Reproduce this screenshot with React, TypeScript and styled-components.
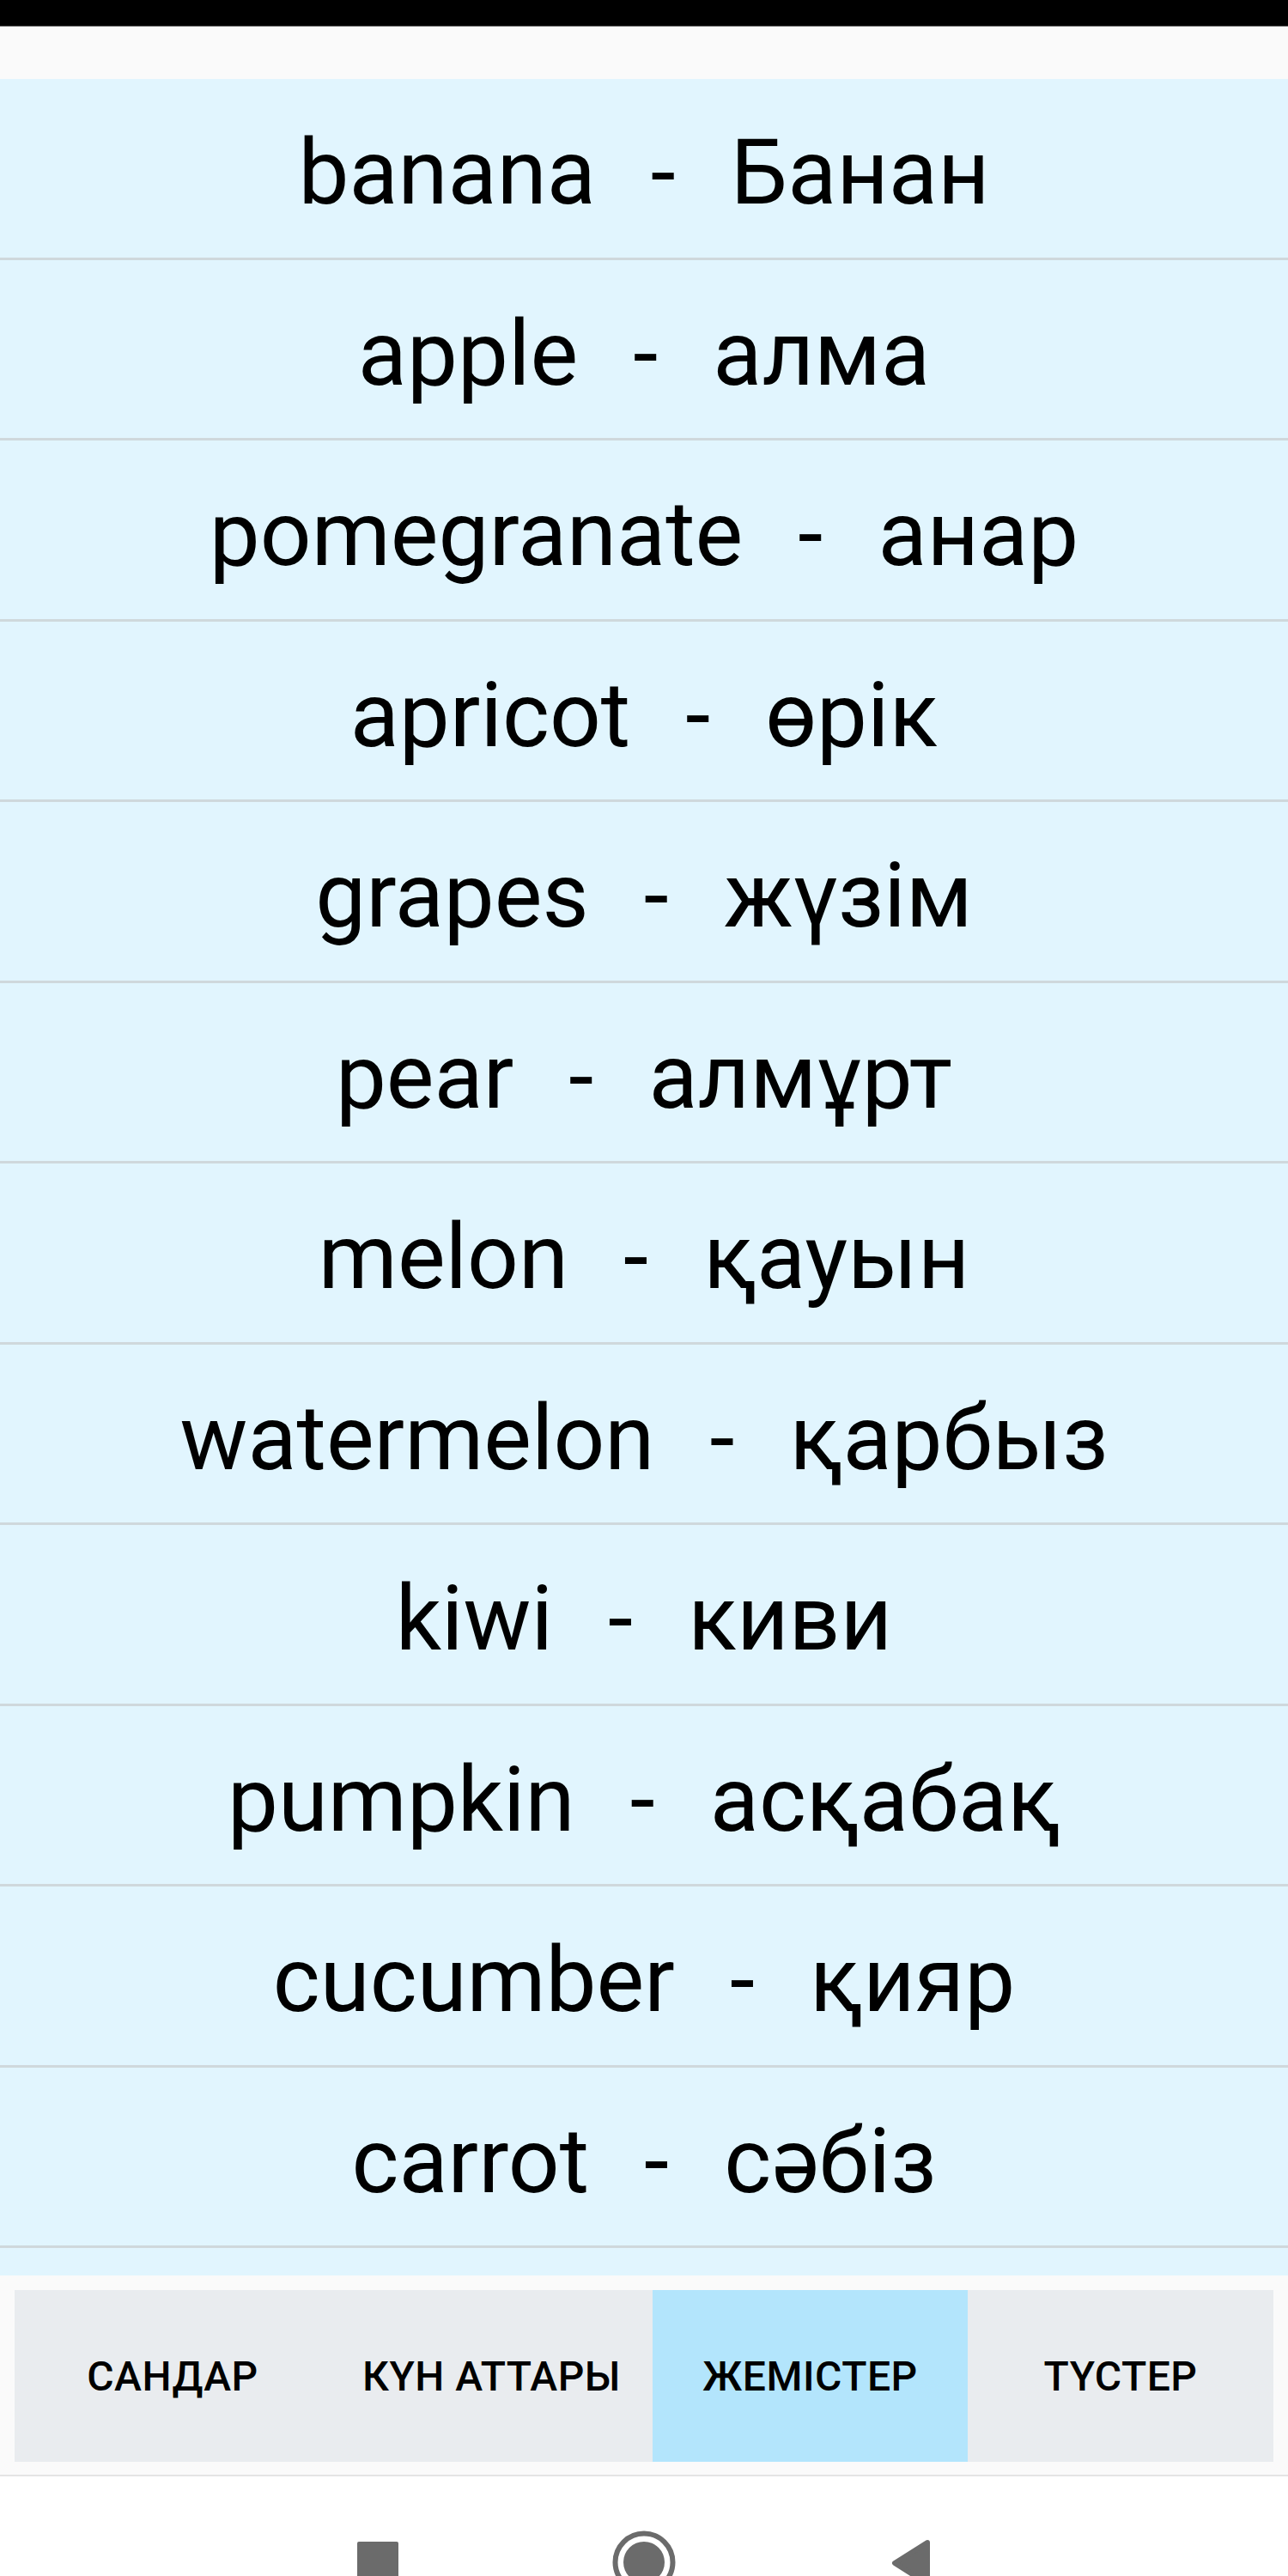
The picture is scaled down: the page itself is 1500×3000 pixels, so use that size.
import styled, { createGlobalStyle } from 'styled-components';

const GlobalStyle = createGlobalStyle`
    html, body {
        margin: 0;
        padding: 0;
        background: #ffffff;
    }
    body {
        font-family: Roboto, "Noto Sans", "Liberation Sans", sans-serif;
    }
`;

const Screen = styled.div`
    width: 1500px;
    height: 3000px;
    display: flex;
    flex-direction: column;
    overflow: hidden;
    background: #fafafa;
`;

const StatusBar = styled.div`
    flex: none;
    height: 30px;
    background: #000000;
    border-bottom: 1px solid #6a6a6a;
`;

const TopGap = styled.div`
    flex: none;
    height: 61px;
    background: #fafafa;
`;

const WordList = styled.ul`
    flex: none;
    height: 2558px;
    margin: 0;
    padding: 0;
    list-style: none;
    overflow: hidden;
    background: #e1f5fe;
`;

const WordRow = styled.li`
    box-sizing: border-box;
    height: 210.5px;
    padding-top: 12px;
    border-bottom: 3px solid #cfd8dc;
    display: flex;
    align-items: center;
    justify-content: center;
    font-size: 105px;
    word-spacing: 6px;
    color: #000000;
    white-space: pre;
`;

const TabArea = styled.div`
    flex: none;
    padding: 17px 17px 15px;
    background: #fafafa;
    border-bottom: 2px solid #e4e4e4;
`;

const TabBar = styled.div`
    display: grid;
    grid-template-columns: 368fr 375fr 367fr 356fr;
    height: 200px;
    background: #e9ecef;
`;

const Tab = styled.button<{ $active?: boolean }>`
    border: none;
    margin: 0;
    padding: 0;
    background: ${p => (p.$active ? '#b3e5fc' : 'transparent')};
    font-family: Roboto, "Noto Sans", sans-serif;
    font-size: 48px;
    font-weight: 500;
    letter-spacing: 0.5px;
    color: #000000;
    text-transform: uppercase;
    cursor: pointer;
`;

const NavBar = styled.div`
    flex: 1;
    display: flex;
    justify-content: center;
    align-items: flex-start;
    padding-top: 60px;
    background: #ffffff;
`;

const NavSlot = styled.div`
    width: 310px;
    display: flex;
    justify-content: center;
`;

const words: [string, string][] = [
    ['banana', 'Банан'],
    ['apple', 'алма'],
    ['pomegranate', 'анар'],
    ['apricot', 'өрік'],
    ['grapes', 'жүзім'],
    ['pear', 'алмұрт'],
    ['melon', 'қауын'],
    ['watermelon', 'қарбыз'],
    ['kiwi', 'киви'],
    ['pumpkin', 'асқабақ'],
    ['cucumber', 'қияр'],
    ['carrot', 'сәбіз'],
];

const tabs = ['Сандар', 'Күн аттары', 'Жемістер', 'Түстер'];

const iconColor = '#6b6b6b';

function App() {
    return (
        <Screen>
            <GlobalStyle />
            <StatusBar />
            <TopGap />
            <WordList>
                {words.map(([en, kz]) => (
                    <WordRow key={en}>{`${en}  -  ${kz}`}</WordRow>
                ))}
            </WordList>
            <TabArea>
                <TabBar>
                    {tabs.map(t => (
                        <Tab key={t} $active={t === 'Жемістер'}>{t}</Tab>
                    ))}
                </TabBar>
            </TabArea>
            <NavBar>
                <NavSlot>
                    <svg width="80" height="80" viewBox="0 0 80 80">
                        <rect x="16" y="16" width="48" height="48" rx="2" fill={iconColor} />
                    </svg>
                </NavSlot>
                <NavSlot>
                    <svg width="80" height="80" viewBox="0 0 80 80">
                        <circle cx="40" cy="40" r="33.5" fill="none" stroke={iconColor} strokeWidth="6" />
                        <circle cx="40" cy="40" r="24" fill={iconColor} />
                    </svg>
                </NavSlot>
                <NavSlot>
                    <svg width="80" height="80" viewBox="0 0 80 80">
                        <path d="M60 17 L22 41 L60 65 Z" fill={iconColor} stroke={iconColor} strokeWidth="6" strokeLinejoin="round" />
                    </svg>
                </NavSlot>
            </NavBar>
        </Screen>
    );
}

export default App;
